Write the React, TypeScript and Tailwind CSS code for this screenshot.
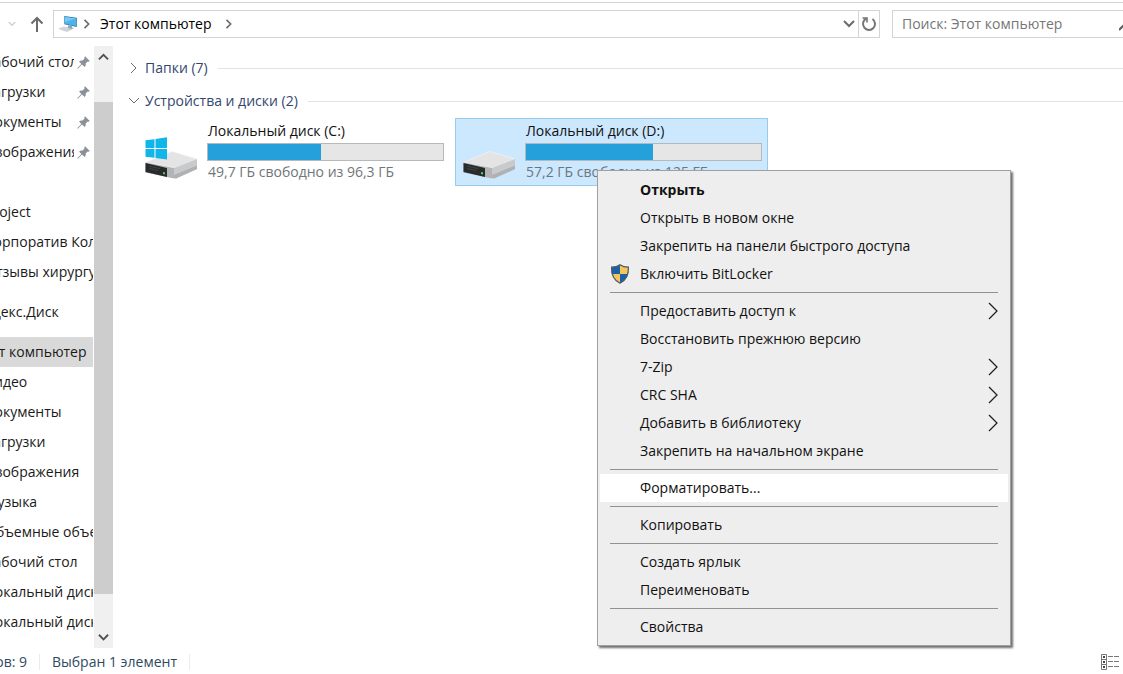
import { ReactNode } from "react";

type TreeItem = { label: string; root?: boolean; pinned?: boolean; active?: boolean; gap?: string };

const tree: TreeItem[] = [
  { label: "Рабочий стол", pinned: true },
  { label: "Загрузки", pinned: true },
  { label: "Документы", pinned: true },
  { label: "Изображения", pinned: true },
  { label: "Project", gap: "mt-[30px]" },
  { label: "Корпоратив Колл" },
  { label: "Отзывы хирургу" },
  { label: "Яндекс.Диск", root: true, gap: "mt-[10px]" },
  { label: "Этот компьютер", root: true, active: true, gap: "mt-[10px]" },
  { label: "Видео" },
  { label: "Документы" },
  { label: "Загрузки" },
  { label: "Изображения" },
  { label: "Музыка" },
  { label: "Объемные объекты" },
  { label: "Рабочий стол" },
  { label: "Локальный диск (C:)" },
  { label: "Локальный диск (D:)" },
];

type MenuItem = { label: string; bold?: boolean; shield?: boolean; submenu?: boolean; active?: boolean };

const menu: MenuItem[][] = [
  [
    { label: "Открыть", bold: true },
    { label: "Открыть в новом окне" },
    { label: "Закрепить на панели быстрого доступа" },
    { label: "Включить BitLocker", shield: true },
  ],
  [
    { label: "Предоставить доступ к", submenu: true },
    { label: "Восстановить прежнюю версию" },
    { label: "7-Zip", submenu: true },
    { label: "CRC SHA", submenu: true },
    { label: "Добавить в библиотеку", submenu: true },
    { label: "Закрепить на начальном экране" },
  ],
  [{ label: "Форматировать...", active: true }],
  [{ label: "Копировать" }],
  [{ label: "Создать ярлык" }, { label: "Переименовать" }],
  [{ label: "Свойства" }],
];

const chevrons = {
  right: "M3 1l5 5-5 5",
  down: "M1 3l5 5 5-5",
  up: "M1 8l5-5 5 5",
};

function Chevron({ dir, className, width = 2 }: { dir: keyof typeof chevrons; className: string; width?: number }) {
  return (
    <svg viewBox="0 0 12 12" fill="none" stroke="currentColor" strokeWidth={width} className={`shrink-0 ${className}`}>
      <path d={chevrons[dir]} />
    </svg>
  );
}

function PinIcon() {
  return (
    <svg viewBox="0 0 12 12" className="size-[13px] shrink-0" fill="#8b9197">
      <path d="M7.4.2 11.8 4.6 10.7 5.3 9.9 5 8 7c.3 1.200-.1 2.400-.9 3.200L4.600 7.900.8 11.700.2 11.300 4 7.300 1.900 5.100C2.700 4.300 3.900 3.900 5.100 4.200L7 2.300 6.700 1.300z" />
    </svg>
  );
}

function ComputerIcon() {
  return (
    <svg viewBox="0 0 20 18" className="h-[18px] w-5 shrink-0">
      <path d="M6.300 1 18.800 2.700V12L6.300 9.300z" fill="#247eb5" />
      <path d="M7 1.900 18 3.500V11L7 8.700z" fill="#4db4eb" />
      <path d="M7 1.900 18 3.500 7 7z" fill="#79cbf3" />
      <path d="M10 10.200l4 .9v1.500l2 .8-3.500.8-4-1.200 1.500-.7z" fill="#98a6af" />
      <path d="M1 13.700 6 12l7.800 2.200-5 2.300z" fill="#dce3e7" stroke="#b6c2c9" strokeWidth=".6" />
      <path d="M3 13.800l7.500 2M5 13.100l7.200 1.800" stroke="#b6c2c9" strokeWidth=".5" />
    </svg>
  );
}

function DriveIcon({ system }: { system?: boolean }) {
  return (
    <svg viewBox="0 0 52 42" className="h-[42px] w-[52px] shrink-0">
      <path d="M.5 25.500 27 14.500 52 22 30 31z" fill="#e4e4e5" />
      <path d="M.5 25.500 27 14.500 52 22 30 31z" fill="none" stroke="#f2f2f2" strokeWidth=".7" />
      <path d="M29 31 52 22v10L31 41.500 29 41z" fill="#c9cacc" />
      <path d="M29 38 52 28.500V32L31 41.500 29 41z" fill="#b0b1b4" />
      <path d="M.5 25.500 29 31v10.500L.5 35.500z" fill="#b3b4b6" />
      <path d="M.5 26 22 31v9L.5 35z" fill="#272b2b" />
      <path d="M4 29.200 15 31.600M4 31.500l9 2" stroke="#454a49" strokeWidth=".8" />
      <path d="M18 35l2 .4v2l-2-.4z" fill="#4fd46b" />
      {system && (
        <g fill="#10b5ea">
          <path d="M.5 3.300 9.500 2.200V11H.5zM10.500 2 22 .3V11H10.500zM.5 12h9v8.800L.5 19.700zM10.500 12H22v10.600L10.500 21z" />
        </g>
      )}
    </svg>
  );
}

function ShieldIcon() {
  return (
    <svg viewBox="0 0 20 20" className="size-5">
      <defs>
        <clipPath id="shield">
          <path d="M10 .8c2.500 1.800 5.200 2.400 8.400 2.400.4 7.500-1.600 12.600-8.400 16C3.200 15.800 1.200 10.700 1.600 3.200 4.800 3.200 7.500 2.600 10 .8z" />
        </clipPath>
      </defs>
      <g clipPath="url(#shield)">
        <path d="M0 0h10v10H0z" fill="#1c60a8" />
        <path d="M10 0h10v10H10z" fill="#f3c75a" />
        <path d="M0 10h10v10H0z" fill="#f3c75a" />
        <path d="M10 10h10v10H10z" fill="#1c60a8" />
      </g>
      <path
        d="M10 .8c2.500 1.800 5.200 2.400 8.400 2.400.4 7.500-1.600 12.600-8.400 16C3.200 15.800 1.200 10.700 1.600 3.200 4.800 3.200 7.500 2.600 10 .8z"
        fill="none"
        stroke="#4c5866"
        strokeWidth="1.200"
      />
    </svg>
  );
}

function Toolbar() {
  return (
    <header className="flex items-center overflow-hidden border-t border-[#d4d4d4] mt-0.5 pt-[7px] pb-2">
      <button aria-label="Последние расположения" className="w-6 flex justify-center text-[#cfcfcf]">
        <Chevron dir="down" className="size-2" />
      </button>
      <button aria-label="Вверх" className="w-[29px] pr-1 flex justify-center text-[#6b6b6b]">
        <svg viewBox="0 0 14 16" fill="none" stroke="currentColor" strokeWidth="2" className="h-4 w-3.5">
          <path d="M7 16V2M1.500 7.500 7 2l5.500 5.500" />
        </svg>
      </button>
      <nav className="flex-1 min-w-0 h-7 flex items-center border border-[#d4d4d4] pl-1">
        <ComputerIcon />
        <Chevron dir="right" className="size-[10px] ml-1 text-[#6b6b6b]" />
        <a href="#" className="ml-2 text-black">Этот компьютер</a>
        <Chevron dir="right" className="size-[10px] ml-3 text-[#6b6b6b]" />
        <button aria-label="Журнал адресов" className="ml-auto mr-[3px] text-[#6b6b6b]">
          <Chevron dir="down" className="size-3" />
        </button>
        <button aria-label="Обновить" className="h-full w-[21px] border-l border-[#d4d4d4] flex items-center justify-center">
          <svg viewBox="0 0 16 16" fill="none" stroke="#747474" strokeWidth="2" className="size-4">
            <path d="M11.500 3A6 6 0 1 1 5 2.700" />
            <path d="M1.500 2H6v4.500" strokeWidth="1.600" />
          </svg>
        </button>
      </nav>
      <form className="ml-3 w-[231px] h-7 flex items-center border border-r-0 border-[#d4d4d4] pl-[9px]">
        <input
          type="search"
          aria-label="Поиск"
          placeholder="Поиск: Этот компьютер"
          className="flex-1 min-w-0 bg-transparent outline-none placeholder:text-[#767676]"
        />
        <svg viewBox="0 0 4 16" className="h-4 w-1 shrink-0" fill="none" stroke="#5c5c5c" strokeWidth="2">
          <path d="M0 14l5-5" />
        </svg>
      </form>
    </header>
  );
}

function Sidebar() {
  return (
    <aside className="flex shrink-0">
      <ul className="w-[94px] overflow-hidden pt-px pr-px">
        {tree.map((item, i) => (
          <li
            key={i}
            className={`h-[30px] flex items-center text-[#1a1a1a] ${item.gap ?? ""} ${item.active ? "bg-[#d9d9d9]" : ""}`}
          >
            <div className={`overflow-hidden whitespace-nowrap ${item.pinned ? "w-[74px] mr-[3px]" : "w-full"}`}>
              <a href="#" className={item.root ? "-ml-[25px]" : "-ml-[15px]"}>{item.label}</a>
            </div>
            {item.pinned ? <PinIcon /> : null}
          </li>
        ))}
      </ul>
      <div className="w-[19px] flex flex-col bg-[#f0f0f0] text-[#505050]">
        <button aria-label="Прокрутить вверх" className="h-[22px] flex items-center justify-center">
          <Chevron dir="up" className="size-[11px]" />
        </button>
        <div className="flex-1 flex flex-col">
          <div className="basis-[34px] shrink-0" />
          <div className="grow bg-[#cdcdcd]" />
          <div className="basis-8 shrink-0" />
        </div>
        <button aria-label="Прокрутить вниз" className="h-[22px] flex items-center justify-center">
          <Chevron dir="down" className="size-[11px]" />
        </button>
      </div>
    </aside>
  );
}

function GroupHeader({ title, open }: { title: string; open?: boolean }) {
  return (
    <div className="h-8 flex items-center">
      <button className="flex items-center text-[#34466f]">
        <Chevron dir={open ? "down" : "right"} width={1} className="size-3 mr-[5px] text-[#6d6d6d]" />
        {title}
      </button>
      <span className="ml-[10px] flex-1 h-px bg-[#e2e2e2]" />
    </div>
  );
}

type DriveProps = { name: string; info: string; used: number; system?: boolean; selected?: boolean; children?: ReactNode };

function Drive({ name, info, used, system, selected, children }: DriveProps) {
  return (
    <div
      className={`relative w-[313px] h-[68px] flex shrink-0 border pl-[7px] pr-[5px] ${
        selected ? "bg-[#cce8ff] border-[#99cbec]" : "border-transparent"
      }`}
    >
      <div className="pt-[18px] mr-[10px]">
        <DriveIcon system={system} />
      </div>
      <div className="flex-1 pt-0.5 whitespace-nowrap">
        <p className="pl-px leading-5 text-[#111]">{name}</p>
        <div
          role="progressbar"
          aria-label={name}
          aria-valuenow={used}
          className="mt-0.5 h-[18px] border border-[#b5b9bb] bg-[#e6e6e6]"
        >
          <div className="h-full bg-[#26a0da]" style={{ width: `${used}%` }} />
        </div>
        <p className="pl-px mt-px leading-5 text-[#6f7679]">{info}</p>
      </div>
      {children}
    </div>
  );
}

function ContextMenu() {
  return (
    <div
      role="menu"
      className="absolute left-[141px] top-[51px] z-10 w-[414px] px-0.5 pt-[5px] pb-1 bg-[#eeeeee] border border-[#a0a0a0] shadow-[2px_2px_2px_#6f6f6f]"
    >
      {menu.map((group, i) => (
        <div key={i}>
          {i > 0 && <hr className="mx-[10px] my-1 border-[#919191]" />}
          {group.map((item) => (
            <button
              key={item.label}
              role="menuitem"
              className={`w-full h-7 flex items-center text-left text-[#111] ${item.active ? "bg-white" : ""}`}
            >
              <span className="w-10 pl-[10px] shrink-0">{item.shield ? <ShieldIcon /> : null}</span>
              <span className={item.bold ? "font-bold" : ""}>{item.label}</span>
              {item.submenu ? (
                <svg viewBox="0 0 10 18" fill="none" stroke="#222" strokeWidth="1.300" className="ml-auto mr-[10px] h-[18px] w-[10px]">
                  <path d="M1 1l8 8-8 8" />
                </svg>
              ) : null}
            </button>
          ))}
        </div>
      ))}
    </div>
  );
}

function StatusBar() {
  return (
    <footer className="h-[26px] pt-0.5 flex items-center overflow-hidden whitespace-nowrap text-[#2f4a5e]">
      <div className="w-[27px] flex justify-end shrink-0">Элементов: 9</div>
      <span className="ml-3 h-4 w-px bg-[#ececec]" />
      <span className="ml-3">Выбран 1 элемент</span>
      <span className="ml-3 h-4 w-px bg-[#ececec]" />
      <button aria-label="Таблица" className="ml-auto mr-1">
        <svg viewBox="0 0 19 16" fill="none" stroke="#777" className="h-4 w-[19px]">
          <path d="M1.500.5h5v15h-5zM1.500 5.500h5M1.500 10.500h5M8 2.500h5M14 2.500h5M8 7.500h5M14 7.500h5M8 12.500h5M14 12.500h5" />
          <path d="M3 3h2M3 8h2M3 13h2" stroke="#444" strokeWidth="2" />
        </svg>
      </button>
    </footer>
  );
}

export default function App() {
  return (
    <div className="h-screen flex flex-col overflow-hidden bg-white font-['Open_Sans','Noto_Sans',sans-serif] text-sm leading-5">
      <Toolbar />
      <div className="flex-1 min-h-0 flex">
        <Sidebar />
        <main className="flex-1 min-w-0 pt-1.5 pl-[15px] flex flex-col gap-px">
          <GroupHeader title="Папки (7)" />
          <section>
            <GroupHeader title="Устройства и диски (2)" open />
            <div className="flex gap-[5px] pl-[9px] pt-px">
              <Drive name="Локальный диск (C:)" info="49,7 ГБ свободно из 96,3 ГБ" used={48} system />
              <Drive name="Локальный диск (D:)" info="57,2 ГБ свободно из 125 ГБ" used={54} selected>
                <ContextMenu />
              </Drive>
            </div>
          </section>
        </main>
      </div>
      <StatusBar />
    </div>
  );
}
